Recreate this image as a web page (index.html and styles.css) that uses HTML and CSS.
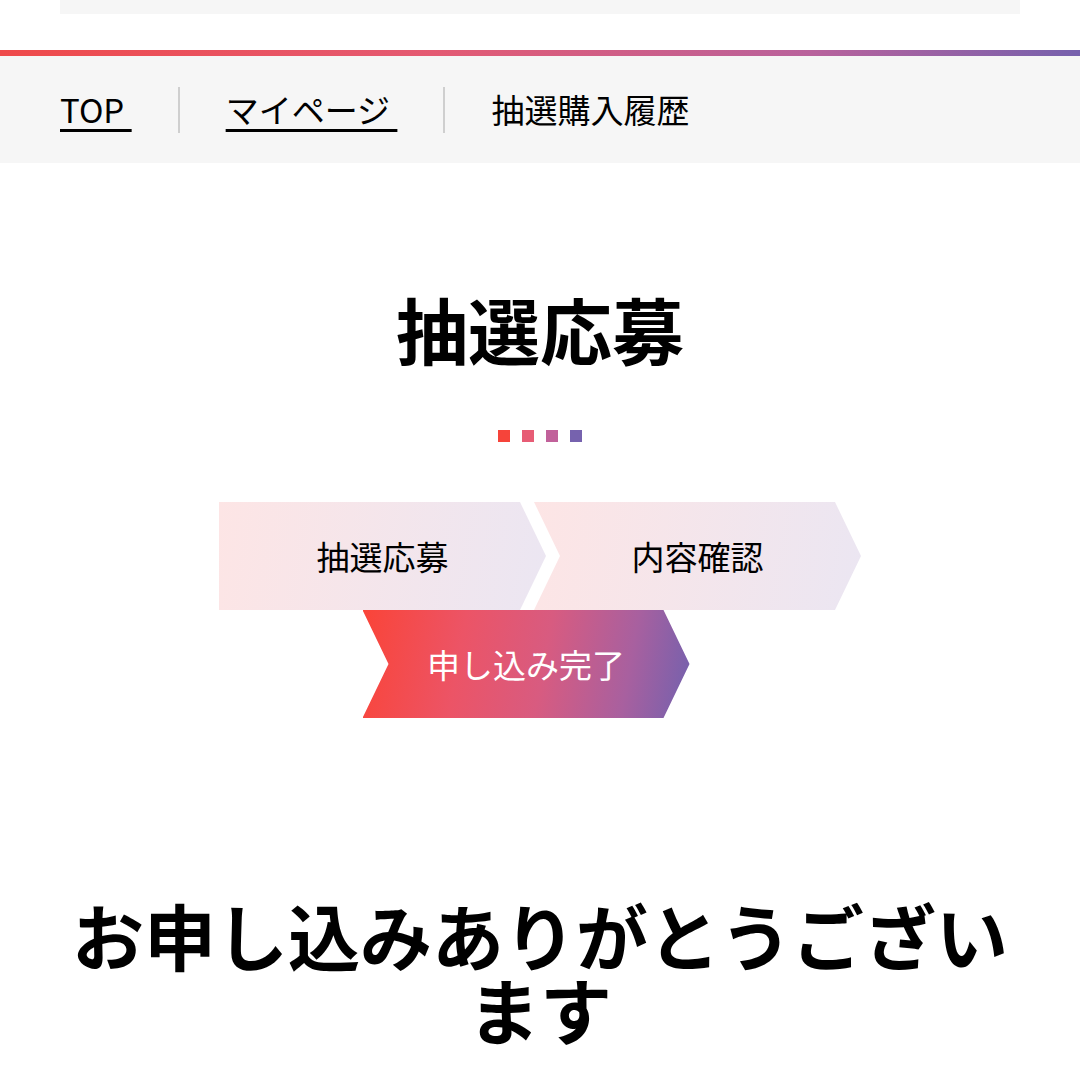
FILE: index.html
```html
<!DOCTYPE html>
<html lang="ja">
<head>
<meta charset="utf-8">
<title>抽選応募</title>
<link rel="stylesheet" href="styles.css">
</head>
<body>
<div class="topbox"></div>
<div class="gradbar"></div>
<nav class="breadcrumb">
  <a class="crumb link" href="#">TOP&nbsp;</a>
  <span class="sep"></span>
  <a class="crumb link" href="#">マイページ&nbsp;</a>
  <span class="sep"></span>
  <span class="crumb">抽選購入履歴</span>
</nav>
<main class="main">
  <h1 class="title">抽選応募</h1>
  <div class="dots">
    <span class="dot d1"></span>
    <span class="dot d2"></span>
    <span class="dot d3"></span>
    <span class="dot d4"></span>
  </div>
  <div class="steps">
    <div class="row">
      <div class="step first">抽選応募</div>
      <div class="step notch second">内容確認</div>
    </div>
    <div class="row">
      <div class="step notch active">申し込み完了</div>
    </div>
  </div>
  <h2 class="thanks">お申し込みありがとうございます</h2>
</main>
</body>
</html>
```

FILE: styles.css
```css
html, body {
  margin: 0;
  padding: 0;
  background: #ffffff;
}
body {
  font-family: "Noto Sans CJK JP", "Noto Sans", sans-serif;
  color: #000;
}
.topbox {
  margin: 0 60px;
  height: 14px;
  background: #f6f6f6;
}
.gradbar {
  margin-top: 36px;
  height: 6px;
  background: linear-gradient(to right, #ef4a4b 0%, #e45a72 40%, #b9629c 75%, #7661ad 100%);
}
.breadcrumb {
  background: #f6f6f6;
  height: 107px;
  padding: 0 60px;
  display: flex;
  align-items: center;
}
.crumb {
  font-size: 33px;
  line-height: 1;
  color: #000;
  white-space: nowrap;
}
.link {
  text-decoration: underline;
  text-decoration-thickness: 3px;
  text-underline-offset: 6px;
}
.sep {
  width: 2px;
  height: 46px;
  background: #cfcfcf;
  margin: 0 46px;
}
.main {
  padding: 0 60px;
}
.title {
  margin: 129px 0 0;
  font-size: 72px;
  line-height: 72px;
  font-weight: 700;
  text-align: center;
}
.dots {
  margin-top: 66px;
  display: flex;
  justify-content: center;
  gap: 12px;
}
.dot {
  width: 12px;
  height: 12px;
}
.d1 { background: #f6443a; }
.d2 { background: #e75c75; }
.d3 { background: #c1619a; }
.d4 { background: #7662ae; }
.steps {
  margin-top: 60px;
}
.row {
  display: flex;
  justify-content: center;
}
.step {
  width: 327px;
  height: 108px;
  display: flex;
  align-items: center;
  justify-content: center;
  font-size: 33px;
  color: #000;
  background: linear-gradient(100deg, #fde5e5, #ebe6f2);
  clip-path: polygon(0 0, calc(100% - 26px) 0, 100% 50%, calc(100% - 26px) 100%, 0 100%, 26px 50%);
}
.first {
  clip-path: polygon(0 0, calc(100% - 26px) 0, 100% 50%, calc(100% - 26px) 100%, 0 100%);
}
.second {
  margin-left: -12px;
}
.active {
  color: #fff;
  margin-right: 28px;
  background: linear-gradient(100deg, #fa4438 0%, #ec5466 30%, #d85b80 55%, #a8609f 80%, #7261ae 100%);
}
.thanks {
  margin: 179px 0 0;
  font-size: 72px;
  line-height: 74px;
  font-weight: 700;
  text-align: center;
}
```
